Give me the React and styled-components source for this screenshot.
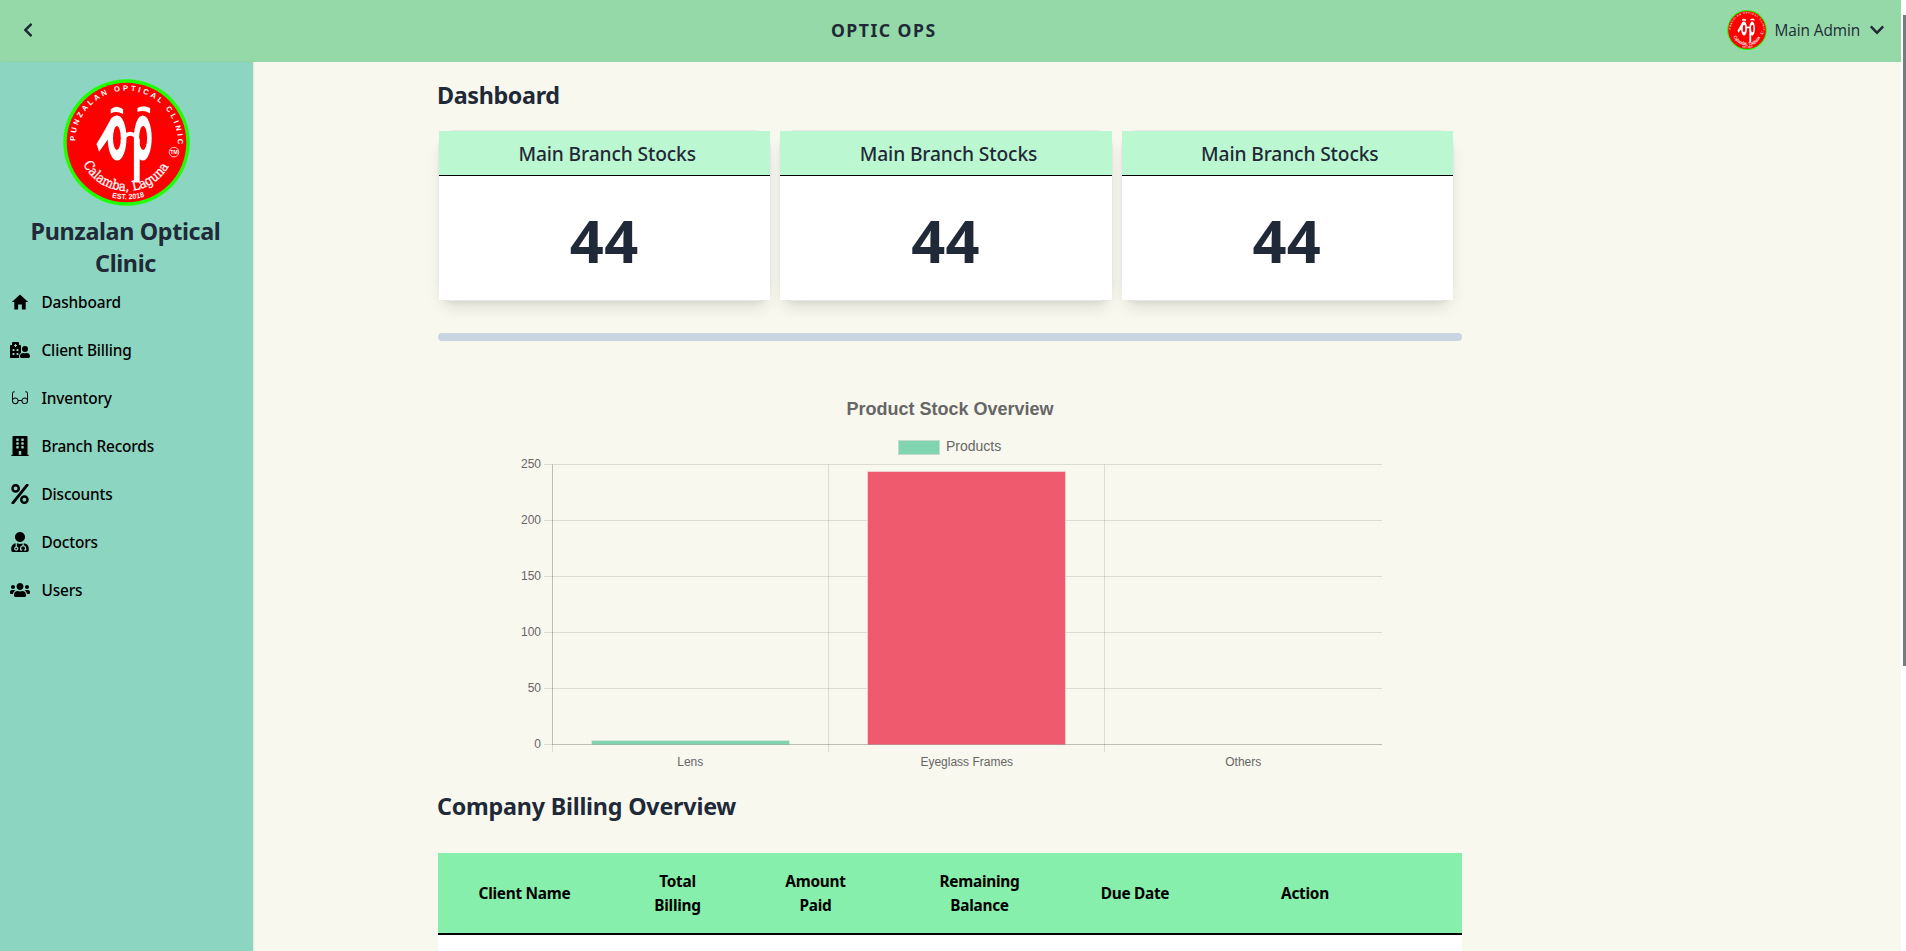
import React, { useId } from 'react';
import styled, { createGlobalStyle } from 'styled-components';
import { FaHospitalUser, FaBuilding, FaPercent, FaUserMd, FaUsers, FaChevronLeft, FaChevronDown } from 'react-icons/fa';
import { IoMdHome } from 'react-icons/io';
import { PiEyeglassesLight } from 'react-icons/pi';

const GlobalStyle = createGlobalStyle`
  *, *::before, *::after { box-sizing: border-box; }
  body {
    margin: 0;
    background: #f8f8ee;
    color: #1f2937;
    font-family: 'Noto Sans', 'Open Sans', sans-serif;
    overflow: hidden;
  }
  h1, h2, p { margin: 0; }
`;

const Shell = styled.div`
  display: flex;
  height: 100vh;
  overflow: hidden;
`;

const Page = styled.div`
  flex: 1;
  min-width: 0;
  display: flex;
  flex-direction: column;
`;

const ScrollTrack = styled.div`
  width: 5px;
  padding: 15px 0 0 2px;
  background: #fff;
`;

const ScrollThumb = styled.div`
  height: 651px;
  background: #757b83;
`;

const TopBar = styled.header`
  flex: none;
  display: flex;
  align-items: center;
  justify-content: space-between;
  height: 62px;
  padding: 0 16px 2px 15px;
  background: #95d9a8;
`;

const BackButton = styled.button`
  display: flex;
  justify-content: center;
  width: 26px;
  padding: 0;
  border: 0;
  background: none;
  color: #1f2937;
`;

const AppTitle = styled.h1`
  font-size: 17.6px;
  font-weight: 700;
  line-height: 28px;
  letter-spacing: 1.5px;
`;

const Account = styled.div`
  display: flex;
  align-items: center;
  font-family: 'Open Sans', sans-serif;
  font-size: 15.4px;
  letter-spacing: -0.1px;

  > span { margin: 0 9px 0 8px; }
`;

const Body = styled.div`
  flex: 1;
  min-height: 0;
  display: flex;
`;

const Sidebar = styled.aside`
  flex: none;
  display: flex;
  flex-direction: column;
  align-items: center;
  width: 253px;
  padding-top: 16.5px;
  background: #8cd5c0;
  box-shadow: 1px 0 2px rgba(0, 0, 0, 0.08);
`;

const ClinicName = styled.h2`
  width: 212px;
  margin-top: 9.5px;
  padding-right: 2px;
  font-size: 23.3px;
  font-weight: 700;
  line-height: 32px;
  letter-spacing: -0.35px;
  text-align: center;
`;

const Nav = styled.nav`
  width: 100%;
  display: flex;
  flex-direction: column;
  gap: 24px;
  margin-top: 11px;
  padding-left: 10px;
`;

const NavItem = styled.a`
  display: flex;
  align-items: center;
  gap: 11.5px;
  height: 24px;
  color: #000;
  font-size: 15.4px;
  font-weight: 500;
  letter-spacing: -0.15px;
`;

const Main = styled.main`
  flex: 1;
  padding: 17px 0 0 185px;
`;

const Content = styled.div`
  width: 1024px;
`;

const Heading = styled.h2`
  margin-left: -1px;
  font-size: 23.3px;
  font-weight: 700;
  line-height: 32px;
  letter-spacing: ${({ $tracking }) => $tracking || '-0.35px'};
`;

const Cards = styled.section`
  display: grid;
  grid-template-columns: repeat(3, 1fr);
  gap: 8px;
  margin-top: 19px;
  padding-right: 8px;
`;

const Card = styled.article`
  height: 171px;
  border: 1px solid #e5e7eb;
  border-radius: 16px;
  box-shadow: 0 10px 15px -3px rgba(0, 0, 0, 0.1), 0 4px 6px -4px rgba(0, 0, 0, 0.1);
`;

const CardTitle = styled.div`
  height: 45px;
  padding-left: 5px;
  border-bottom: 1px solid #000;
  background: #bbf7d0;
  font-size: 19.2px;
  font-weight: 500;
  line-height: 45px;
  letter-spacing: -0.12px;
  text-align: center;
`;

const CardValue = styled.div`
  height: 124px;
  padding: 2px 1px 0 0;
  background: #fff;
  font-size: 59.5px;
  font-weight: 700;
  line-height: 124px;
  letter-spacing: 0.3px;
  text-align: center;
`;

const Divider = styled.div`
  height: 8px;
  margin-top: 32px;
  border-radius: 4px;
  background: #cbd5e1;
`;

const ChartBox = styled.figure`
  margin: 39px 0 0;
  padding-left: 78px;

  svg {
    display: block;
    font-family: 'Liberation Sans', Arial, sans-serif;
    fill: #666;
  }
`;

const BillingHeading = styled(Heading)`
  margin-top: 10px;
`;

const Table = styled.div`
  margin-top: 31px;
  height: 200px;
  background: #fff;
`;

const TableHead = styled.div`
  display: grid;
  grid-template-columns: 173px 133px 143px 185px 126px 214px;
  align-items: center;
  height: 82px;
  padding-top: 2px;
  border-bottom: 2px solid #000;
  background: #86efac;
`;

const HeadCell = styled.div`
  color: #000;
  font-size: 15.4px;
  font-weight: 700;
  line-height: 24px;
  letter-spacing: -0.28px;
  text-align: center;
  white-space: pre;
`;

function ClinicLogo({ size }) {
  const id = useId();
  return (
    <svg width={size} height={size} viewBox="2.5 4.5 127 127">
      <defs>
        <path id={`${id}top`} d="M14.7 66.5 A51.3 51.3 0 1 1 115.2 82" />
        <path id={`${id}mid`} d="M22.6 89.5 A48.5 48.5 0 0 0 113.5 78" />
        <path id={`${id}low`} d="M48.5 122 A57 57 0 0 0 96 116.5" />
      </defs>
      <circle cx="66" cy="68" r="63.2" fill="#1eff00" />
      <circle cx="66" cy="68" r="59.8" fill="#f00" />
      <g fill="#fff">
        <text fontFamily="Liberation Sans, Arial, sans-serif" fontWeight="700" fontSize="7.6">
          <textPath href={`#${id}top`} textLength="162" lengthAdjust="spacing">PUNZALAN OPTICAL CLINIC</textPath>
        </text>
        <text fontFamily="DejaVu Serif, serif" fontSize="13.4" stroke="#fff" strokeWidth="0.3">
          <textPath href={`#${id}mid`} textLength="105" lengthAdjust="spacingAndGlyphs">Calamba, Laguna</textPath>
        </text>
        <text fontFamily="Liberation Sans, Arial, sans-serif" fontWeight="700" fontSize="7.4">
          <textPath href={`#${id}low`} startOffset="3" textLength="33" lengthAdjust="spacingAndGlyphs">EST. 2018</textPath>
        </text>
        <text x="113.5" y="79.6" fontFamily="Liberation Sans, Arial, sans-serif" fontWeight="700" fontSize="5.2" textAnchor="middle">TM</text>
        <path d="M50.2 39 V34.8 Q56 29.5 62.6 34.8 V39.5 Q56 36 50.2 39 Z" />
        <path d="M77 37.6 V33.6 Q83 29.8 89.6 33.6 V39 Q83 35 77 37.6 Z" />
        <path d="M36 69.5 Q46 53 50.5 44 Q53 40.8 57 41.2 L53 57 L38.6 77.2 Z" />
        <path fillRule="evenodd" d="M47.2 63.5 a9.4 22.6 0 1 0 18.8 0 a9.4 22.6 0 1 0 -18.8 0 Z M52.5 63.5 a3.9 12 0 1 0 7.8 0 a3.9 12 0 1 0 -7.8 0 Z" />
        <path fillRule="evenodd" d="M73.4 63.5 a8.9 22.6 0 1 0 17.8 0 a8.9 22.6 0 1 0 -17.8 0 Z M78.6 63.5 a4 12 0 1 0 8 0 a4 12 0 1 0 -8 0 Z" />
        <rect x="73.4" y="64" width="5.8" height="44" />
      </g>
      <path d="M64.5 61.5 Q69.5 57 75 61.5" fill="none" stroke="#fff" strokeWidth="4" />
      <circle cx="113.5" cy="77.6" r="4.8" fill="none" stroke="#fff" strokeWidth="0.8" />
    </svg>
  );
}

const NAV = [
  { label: 'Dashboard', Icon: IoMdHome },
  { label: 'Client Billing', Icon: FaHospitalUser },
  { label: 'Inventory', Icon: PiEyeglassesLight },
  { label: 'Branch Records', Icon: FaBuilding },
  { label: 'Discounts', Icon: FaPercent },
  { label: 'Doctors', Icon: FaUserMd },
  { label: 'Users', Icon: FaUsers },
];

const STOCKS = [
  { id: 1, title: 'Main Branch Stocks', value: 44 },
  { id: 2, title: 'Main Branch Stocks', value: 44 },
  { id: 3, title: 'Main Branch Stocks', value: 44 },
];

const COLUMNS = ['Client Name', 'Total\nBilling', 'Amount\nPaid', 'Remaining\nBalance', 'Due Date', 'Action'];

const PRODUCTS = [
  { label: 'Lens', value: 3.6, color: '#80d4b0' },
  { label: 'Eyeglass Frames', value: 244.5, color: '#f05a6e' },
  { label: 'Others', value: 0, color: '#80d4b0' },
];

const AXIS = { left: 36.5, right: 866, top: 84.5, bottom: 364.5, max: 250 };

function StockChart() {
  const step = (AXIS.right - AXIS.left) / PRODUCTS.length;
  const y = (v) => AXIS.bottom - (v / AXIS.max) * (AXIS.bottom - AXIS.top);
  return (
    <svg width="868" height="400" viewBox="0 0 868 400">
      <text x="434" y="35" fontSize="18" fontWeight="700" textAnchor="middle">Product Stock Overview</text>
      <rect x="382.5" y="60.5" width="41" height="14" fill="#80d4b0" stroke="#c5dccb" />
      <text x="430" y="71" fontSize="14">Products</text>
      {[0, 50, 100, 150, 200, 250].map((v) => (
        <g key={v}>
          <line x1="28" x2={AXIS.right} y1={y(v)} y2={y(v)} stroke="#000" strokeOpacity="0.11" />
          <text x="25" y={y(v) + 3.5} fontSize="12" textAnchor="end">{v}</text>
        </g>
      ))}
      {PRODUCTS.map((p, i) => {
        const x = Math.floor(AXIS.left + step * i - 0.6) + (i === 0 ? 1.5 : 0.5);
        const mid = AXIS.left + step * (i + 0.5) - 0.5;
        return (
          <g key={p.label}>
            <line x1={i === 0 ? AXIS.left : x} x2={i === 0 ? AXIS.left : x} y1={AXIS.top} y2="372" stroke="#000" strokeOpacity="0.11" />
            <text x={mid} y="386" fontSize="12" textAnchor="middle">{p.label}</text>
          </g>
        );
      })}
      {PRODUCTS.filter((p) => p.value > 0).map((p) => {
        const i = PRODUCTS.indexOf(p);
        const left = Math.floor(AXIS.left + step * i + step * 0.14) + 0.5;
        const right = left + 198;
        return (
          <path
            key={p.label}
            d={`M${left} ${AXIS.bottom} V${Math.round(y(p.value)) + 0.5} H${right} V${AXIS.bottom}`}
            fill={p.color}
            stroke="#e9e9df"
            strokeOpacity="0.6"
          />
        );
      })}
      <path d={`M${AXIS.left} ${AXIS.top} V${AXIS.bottom} H${AXIS.right}`} fill="none" stroke="#000" strokeOpacity="0.14" />
    </svg>
  );
}

export default function App() {
  return (
    <>
      <GlobalStyle />
      <Shell>
        <Page>
          <TopBar>
            <BackButton aria-label="Back"><FaChevronLeft size={16} /></BackButton>
            <AppTitle>OPTIC OPS</AppTitle>
            <Account>
              <ClinicLogo size={40} />
              <span>Main Admin</span>
              <FaChevronDown size={16} />
            </Account>
          </TopBar>
          <Body>
            <Sidebar>
              <ClinicLogo size={127} />
              <ClinicName>Punzalan Optical Clinic</ClinicName>
              <Nav>
                {NAV.map(({ label, Icon }) => (
                  <NavItem key={label}>
                    <Icon size={20} />
                    {label}
                  </NavItem>
                ))}
              </Nav>
            </Sidebar>
            <Main>
              <Content>
                <Heading>Dashboard</Heading>
                <Cards>
                  {STOCKS.map((s) => (
                    <Card key={s.id}>
                      <CardTitle>{s.title}</CardTitle>
                      <CardValue>{s.value}</CardValue>
                    </Card>
                  ))}
                </Cards>
                <Divider />
                <ChartBox><StockChart /></ChartBox>
                <BillingHeading $tracking="-0.22px">Company Billing Overview</BillingHeading>
                <Table>
                  <TableHead>
                    {COLUMNS.map((c) => <HeadCell key={c}>{c}</HeadCell>)}
                  </TableHead>
                </Table>
              </Content>
            </Main>
          </Body>
        </Page>
        <ScrollTrack><ScrollThumb /></ScrollTrack>
      </Shell>
    </>
  );
}
